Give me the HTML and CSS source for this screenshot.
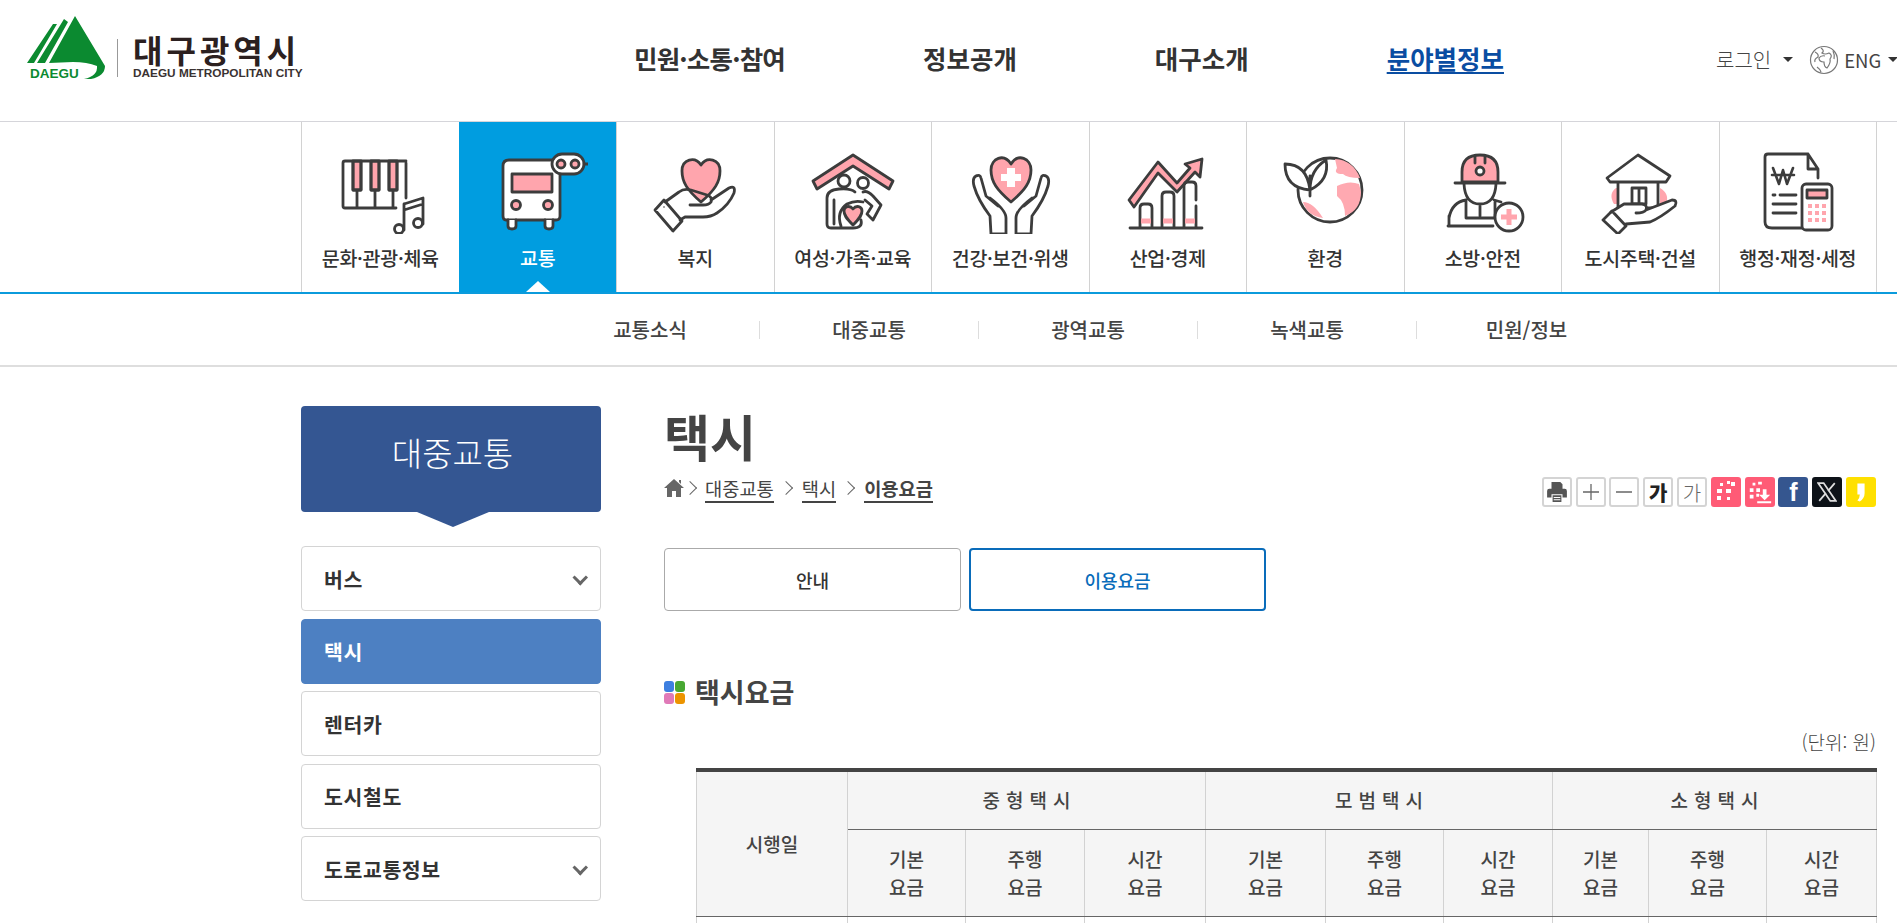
FILE: index.html
```html
<!DOCTYPE html>
<html lang="ko">
<head>
<meta charset="utf-8">
<title>택시 이용요금</title>
<link rel="stylesheet" href="styles.css">
</head>
<body>
<header class="top">
  <a class="logo">
    <span class="mark">
      <svg width="80" height="64" viewBox="0 0 80 64">
        <path class="g" d="M48 0 L78 50 Q78 60 64 63 L57 63 Q71 60 70 50 Q60 46 46 46 L22 47 Z M26 8 L30 8 L7 47 L0 47 Z M37 3 L41 6 L18 47 L10 47 Z"/>
        <text class="mark-t" x="3" y="62">DAEGU</text>
      </svg>
    </span>
    <span class="logo-bar"></span>
    <span class="logo-txt"><b>대구광역시</b><i>DAEGU METROPOLITAN CITY</i></span>
  </a>
  <nav class="gnb">
    <a>민원·소통·참여</a><a>정보공개</a><a>대구소개</a><a class="on">분야별정보</a>
  </nav>
  <div class="util">
    <span class="login">로그인</span><span class="caret"></span>
    <svg class="globe" width="30" height="30" viewBox="0 0 30 30"><circle cx="15" cy="15" r="13.5"/><path d="M6 7 Q10 9 9 12 Q5 14 6 17 M12 3 Q16 6 13 8 Q16 10 20 8 Q24 10 21 14 Q22 18 18 23 Q15 22 15 17 Q10 17 10 13 Q12 10 16 11 M24 6 Q26 10 25 14 M8 22 Q11 24 12 27"/></svg>
    <span class="eng">ENG</span><span class="caret"></span>
  </div>
</header>

<nav class="cats">
  <a class="cat">
    <svg class="ic" viewBox="0 0 100 84"><rect class="p" x="23" y="11" width="8" height="29"/><rect class="p" x="41" y="11" width="8" height="29"/><rect class="p" x="59" y="11" width="8" height="29"/><path d="M76 11 H15 Q13 11 13 13 V56 Q13 58 15 58 H66 M27 40 V58 M45 40 V58 M63 40 V58 M23 11 V40 H31 V11 M41 11 V40 H49 V11 M59 11 V40 H67 V11 M76 13 V48 M74 54 L93 48 V74 M74 54 V80 M74 60 L93 54"/><circle cx="69" cy="79" r="4.5"/><circle cx="88" cy="73" r="4.5"/></svg>
    <span>문화·관광·체육</span>
  </a>
  <a class="cat on">
    <svg class="ic" viewBox="0 0 100 84"><path class="w" d="M21 10 H72 V66 Q72 70 68 70 H18 Q15 70 15 66 V16 Q15 10 21 10 Z"/><rect class="p" x="24" y="24" width="40" height="18"/><circle class="p" cx="28" cy="55" r="4.5"/><circle class="p" cx="60" cy="55" r="4.5"/><path class="w" d="M20 70 V76 Q20 79 24 79 Q28 79 28 76 V70 M57 70 V76 Q57 79 61 79 Q65 79 65 76 V70"/><rect class="w" x="64" y="4" width="32" height="20" rx="10"/><circle class="p" cx="73" cy="14" r="4"/><circle class="p" cx="87" cy="14" r="4"/><path d="M96 14 H100"/></svg>
    <span>교통</span>
  </a>
  <a class="cat">
    <svg class="ic" viewBox="0 0 100 84"><path class="p" d="M56 52 C42 40 37 32 37 21 C37 9 50 6 56 15 C62 6 75 9 75 21 C75 32 70 40 56 52 Z"/><path d="M10 60 L19 50 L37 71 L28 81 Z M20 52 L34 42 Q39 38 46 40 L62 45 Q68 47 66 52 Q64 55 58 55 L45 55 M66 50 L84 38 Q91 35 89 43 Q84 55 72 63 Q66 67 58 67 L40 67 L35 70"/><circle class="dot" cx="19" cy="57" r="0.8"/></svg>
    <span>복지</span>
  </a>
  <a class="cat">
    <svg class="ic" viewBox="0 0 100 84"><path class="p" d="M50 5 L90 31 L86 39 L50 16 L14 39 L10 31 Z"/><circle cx="41" cy="31" r="6"/><circle cx="60" cy="33" r="5.5"/><path d="M52 42 Q48 38 36 39 Q24 40 24 48 V74 Q24 78 28 78 H50 Q60 78 58 70 M31 50 V74 M38 76 Q33 62 44 54 Q52 50 60 52 M60 42 Q64 40 70 46 L78 55 L70 70 L64 64 L69 56 L62 50"/><path class="p" d="M50 75 C43 68 41 65 41 61 C41 56 47 55 50 59 C53 55 59 56 59 61 C59 65 57 68 50 75 Z"/></svg>
    <span>여성·가족·교육</span>
  </a>
  <a class="cat">
    <svg class="ic" viewBox="0 0 100 84"><path class="p" d="M51 52 C37 40 31 32 31 20 C31 8 44 3 51 14 C58 3 71 8 71 20 C71 32 65 40 51 52 Z"/><path class="cross" d="M47 18 H55 V24 H61 V31 H55 V37 H47 V31 H41 V24 H47 Z"/><path d="M16 26 Q20 24 21 28 L26 46 L38 56 M16 26 Q12 28 14 36 Q18 50 30 66 L31 84 H46 V68 Q46 60 30 48 M86 26 Q82 24 81 28 L76 46 L64 56 M86 26 Q90 28 88 36 Q84 50 72 66 L71 84 H56 V68 Q56 60 72 48"/></svg>
    <span>건강·보건·위생</span>
  </a>
  <a class="cat">
    <svg class="ic" viewBox="0 0 100 84"><path class="p" d="M11 50 L40 12 L59 33 L72 18 L67 14 L84 9 L82 27 L77 22 L59 42 L40 23 L16 57 Z"/><path class="w2" d="M22 77 V58 Q22 54 26 54 H30 Q34 54 34 58 V77 M44 77 V46 Q44 42 48 42 H52 Q56 42 56 46 V77 M66 77 V36 Q66 32 70 32 H74 Q78 32 78 36 V50 M78 56 V77"/><path class="pk" d="M23 71 H33 M45 71 H55 M67 71 H77"/><path d="M12 78 H84"/></svg>
    <span>산업·경제</span>
  </a>
  <a class="cat">
    <svg class="ic" viewBox="0 0 100 84"><circle class="globe-b" cx="55" cy="40" r="32"/><path class="ps" d="M60 9 Q78 10 85 28 Q72 28 68 24 Q58 24 62 18 Z M62 36 Q74 30 84 34 L86 42 Q86 60 70 66 Q70 52 62 46 Z M28 52 Q38 52 48 68 Q32 66 28 52 Z"/><path class="lf" d="M35 40 Q10 38 10 14 Q32 14 35 40 Z M35 40 Q35 20 51 10 Q55 30 35 40 Z M35 26 V46"/></svg>
    <span>환경</span>
  </a>
  <a class="cat">
    <svg class="ic" viewBox="0 0 100 84"><path class="p" d="M29 32 V22 Q29 5 47 5 Q65 5 65 22 V32 Z"/><circle class="w" cx="47" cy="21" r="4"/><path d="M42 6 V13 M52 6 V13 M22 33 H72 M31 34 Q32 54 47 54 Q62 54 63 34 M33 50 Q19 52 16 68 V76 M61 50 L68 52 M33 50 V68 H62 V52 M47 56 V66 M15 76 H60 M16 66 V71"/><circle class="wp" cx="76" cy="67" r="14"/><path class="crossp" d="M76 59 V75 M68 67 H84"/></svg>
    <span>소방·안전</span>
  </a>
  <a class="cat">
    <svg class="ic" viewBox="0 0 100 84"><path class="pn" d="M26 38 Q18 44 24 54 H30 V38 Z M70 38 Q80 44 76 54 H70 V38 Z"/><path class="w" d="M28 30 V58 H68 V30"/><path class="w" d="M17 28 L48 5 L80 26 L76 32 H20 Z"/><path d="M42 38 H56 V54 H42 Z M49 38 V54"/><path class="w" d="M13 70 L22 61 L36 76 L28 84 Z"/><path class="w" d="M21 62 L34 54 H52 Q58 55 56 60 Q54 63 46 63 M56 60 L82 50 Q88 50 85 56 Q70 68 60 72 L36 74"/></svg>
    <span>도시주택·건설</span>
  </a>
  <a class="cat">
    <svg class="ic" viewBox="0 0 100 84"><path d="M58 78 H24 Q17 78 17 72 V7 Q17 4 20 4 H60 L70 19 V28 M60 4 V19 H70"/><path class="won" d="M25 18 L31 34 L35 20 L39 34 L45 18 M24 25 H46"/><path d="M25 45 H27 M32 45 H48 M25 54 H48 M25 63 H48"/><rect class="w" x="54" y="34" width="30" height="46" rx="4"/><rect class="p" x="59" y="40" width="20" height="8"/><path class="keys" d="M60 54 h4 v4 h-4 z M67 54 h4 v4 h-4 z M74 54 h4 v4 h-4 z M60 61 h4 v4 h-4 z M67 61 h4 v4 h-4 z M74 61 h4 v4 h-4 z M60 68 h4 v4 h-4 z M67 68 h4 v4 h-4 z M74 68 h4 v4 h-4 z"/></svg>
    <span>행정·재정·세정</span>
  </a>
</nav>

<nav class="subs">
  <a>교통소식</a><a>대중교통</a><a>광역교통</a><a>녹색교통</a><a>민원/정보</a>
</nav>

<div class="wrap">
  <aside class="side">
    <h2 class="side-t">대중교통</h2>
    <ul class="menu">
      <li class="more">버스</li>
      <li class="on">택시</li>
      <li>렌터카</li>
      <li>도시철도</li>
      <li class="more">도로교통정보</li>
    </ul>
  </aside>
  <main class="main">
    <h1 class="title">택시</h1>
    <div class="crumbbar">
      <div class="crumb">
        <svg class="home" width="20" height="20" viewBox="0 0 20 20"><path d="M10 1 L20 10 H17 V19 H12 V13 H8 V19 H3 V10 H0 Z M15 2 H17 V6 L15 4 Z"/></svg>
        <i class="chev"></i><a>대중교통</a><i class="chev"></i><a>택시</a><i class="chev"></i><a class="now">이용요금</a>
      </div>
      <div class="tools">
        <span class="tb"><svg width="22" height="22" viewBox="0 0 20 20"><path class="dk" d="M5 1 H13 L15 3 V7 H5 Z M1 9 Q1 7 3 7 H17 Q19 7 19 9 V15 H15 V12 H5 V15 H1 Z M6 13 H14 V19 H6 Z"/><path class="wh" d="M7 15 H13 M7 17 H13"/></svg></span>
        <span class="tb"><svg width="18" height="18" viewBox="0 0 18 18"><path class="ln" d="M1 9 H17 M9 1 V17"/></svg></span>
        <span class="tb"><svg width="18" height="18" viewBox="0 0 18 18"><path class="ln" d="M1 9 H17"/></svg></span>
        <span class="tb ga strong">가</span>
        <span class="tb ga">가</span>
        <span class="tb pink"><svg width="26" height="26" viewBox="0 0 26 26"><path class="wf" d="M7 4 h3 v3 h-3 z M14 2 h3 v3 h-3 z M18 3 h4 v4 h-4 z M4 10 h5 v4 h-5 z M13 10 h5 v4 h-5 z M4 17 h4 v4 h-4 z M14 18 h3 v3 h-3 z"/></svg></span>
        <span class="tb pink"><svg width="28" height="28" viewBox="0 0 28 28"><path class="wf" d="M6 4 h3 v3 h-3 z M12 3 h4 v3 h-4 z M3 10 h4 v4 h-4 z M10 10 h4 v4 h-4 z M3 17 h4 v4 h-4 z M10 16 h3 v3 h-3 z M17 11 h4 v6 h4 l-6 6 l-6 -6 h4 z M11 24 h15 v2 h-15 z"/></svg></span>
        <span class="tb fb">f</span>
        <span class="tb xx"><svg width="20" height="20" viewBox="0 0 18 18"><path class="wx" d="M1 1 H6 L17 17 H12 Z"/><path class="wl" d="M16 1 L10 8 M8 10 L2 17"/></svg></span>
        <span class="tb kk"><svg width="24" height="24" viewBox="0 0 20 20"><path class="kq" d="M7 3 H13 L13 11 Q13 15 9 18 L7 17 Q9 15 9 12 H7 Z"/></svg></span>
      </div>
    </div>
    <div class="tabs">
      <a class="tab">안내</a>
      <a class="tab on">이용요금</a>
    </div>
    <h3 class="sec"><i class="dots"><b class="d1"></b><b class="d2"></b><b class="d3"></b><b class="d4"></b></i>택시요금</h3>
    <p class="unit">(단위: 원)</p>
    <table class="fare">
      <colgroup><col class="c1"><col class="c2"><col class="c3"><col class="c4"><col class="c5"><col class="c6"><col class="c7"><col class="c8"><col class="c9"><col class="c10"></colgroup>
      <thead>
        <tr class="r1"><th rowspan="2">시행일</th><th colspan="3" class="sp">중형택시</th><th colspan="3" class="sp">모범택시</th><th colspan="3" class="sp">소형택시</th></tr>
        <tr class="r2"><th>기본<br>요금</th><th>주행<br>요금</th><th>시간<br>요금</th><th>기본<br>요금</th><th>주행<br>요금</th><th>시간<br>요금</th><th>기본<br>요금</th><th>주행<br>요금</th><th>시간<br>요금</th></tr>
      </thead>
      <tbody>
        <tr class="r3"><td></td><td></td><td></td><td></td><td></td><td></td><td></td><td></td><td></td><td></td></tr>
      </tbody>
    </table>
  </main>
</div>
</body>
</html>
```
FILE: styles.css
```css
* { box-sizing: border-box; }
html, body { margin: 0; height: 923px; overflow: hidden; background: #fff; }
body { font-family: "Noto Sans CJK KR", "Noto Sans", sans-serif; color: #333; }
a { color: inherit; text-decoration: none; }
ul { list-style: none; margin: 0; padding: 0; }
h1, h2, h3, p { margin: 0; }

/* header */
.top { display: flex; align-items: center; height: 121px; position: relative; padding-left: 27px; }
.logo { display: flex; align-items: center; width: 607px; flex: none; }
.mark { display: block; height: 64px; width: 80px; margin-bottom: 25px; }
.g { fill: #0b8a30; }
.mark-t { font: 700 13.5px "Liberation Sans", sans-serif; fill: #0b8a30; }
.logo-bar { width: 1px; height: 38px; background: #999; margin: 0 15px 5px 10px; flex: none; }
.logo-txt { display: flex; flex-direction: column; margin-bottom: 8px; }
.logo-txt b { font-size: 32px; line-height: 30px; color: #2b2020; font-weight: 700; letter-spacing: 4px; white-space: nowrap; }
.logo-txt i { font: 700 11.8px/13px "Liberation Sans", sans-serif; margin-top: 3px; color: #3a3232; white-space: nowrap; }
.gnb { display: flex; gap: 138px; flex: none; margin-bottom: 6px; }
.gnb a { font-size: 25.5px; font-weight: 700; color: #333; line-height: 34px; white-space: nowrap; }
.gnb a:first-child { letter-spacing: -0.8px; }
.gnb a.on { color: #0a4da2; text-decoration: underline; text-underline-offset: 3px; }
.util { display: flex; align-items: center; margin-left: 212px; margin-bottom: 2px; white-space: nowrap; flex: none; }
.login { font-size: 20px; font-weight: 300; color: #444; }
.eng { font-size: 18.5px; color: #444; margin: 0 7px 0 5px; }
.caret { width: 0; height: 0; border: 5px solid transparent; border-top: 5px solid #333; border-bottom: 0; margin-left: 12px; flex: none; }
.eng + .caret { margin-left: 0; }
.globe { margin-left: 16px; fill: none; stroke: #777; stroke-width: 1.2; flex: none; }

/* category strip */
.cats { display: flex; height: 173px; padding-left: 301px; border-top: 1px solid #d5d5da; border-bottom: 2px solid #0b9bdc; background: #fff; }
.cat { width: 157.5px; flex: none; border-left: 1px solid #d2d2d2; display: flex; flex-direction: column; align-items: center; padding-top: 28px; position: relative; color: #333; }
.cat:last-child { width: 158.5px; border-right: 1px solid #d2d2d2; }
.cat span { font-size: 19.5px; line-height: 28px; font-weight: 500; margin-top: 10px; letter-spacing: -0.3px; white-space: nowrap; }
.cat.on { background: #009de0; border-left-color: #009de0; color: #fff; }
.cat.on::after { content: ""; position: absolute; left: 50%; bottom: 0; margin-left: -12px; border: 12px solid transparent; border-top: 0; border-bottom: 11px solid #fff; }
.ic { width: 100px; height: 84px; flex: none; fill: none; stroke: #3c3c3c; stroke-width: 2.8; stroke-linecap: round; stroke-linejoin: round; }
.ic .p { fill: #ffa5ad; }
.ic .w, .ic .wp { fill: #fff; }
.ic .ps { fill: #ffa9b1; stroke: none; }
.ic .pn { fill: #ffa5ad; stroke: none; }
.ic .pk { stroke: #ffa5ad; stroke-width: 5; stroke-linecap: butt; }
.ic .lf { fill: #fff; }
.ic .cross { fill: #fff; stroke: none; }
.ic .crossp { stroke: #ffa5ad; stroke-width: 5; stroke-linecap: butt; }
.ic .keys { fill: #ffa5ad; stroke: none; }
.ic .won { stroke-width: 2.6; }
.ic .dot { fill: #3c3c3c; stroke: none; }

/* sub nav */
.subs { display: flex; height: 73px; padding-left: 541px; border-bottom: 2px solid #dedede; align-items: center; }
.subs a { width: 219px; text-align: center; font-size: 20px; font-weight: 500; color: #444; line-height: 18px; border-right: 1px solid #ddd; }
.subs a:last-child { border-right: 0; }

/* body */
.wrap { display: flex; padding: 39px 21px 0 301px; gap: 63px; }
.side { width: 300px; flex: none; }
.side-t { height: 106px; padding-left: 3px; background: #345692; border-radius: 4px; color: #fff; font-size: 33px; font-weight: 300; text-align: center; line-height: 92px; position: relative; margin-bottom: 34px; }
.side-t::after { content: ""; position: absolute; left: 50%; top: 100%; margin-left: -34px; border-style: solid; border-width: 15px 36px 0; border-color: #345692 transparent transparent; }
.menu { display: flex; flex-direction: column; gap: 7.5px; }
.menu li { height: 65px; border: 1px solid #d4d4d4; border-radius: 4px; font-size: 20.5px; font-weight: 700; color: #333; display: flex; align-items: center; padding-left: 22px; letter-spacing: 0.6px; position: relative; }
.menu li.on { background: #4d80c2; border-color: #4d80c2; color: #fff; }
.menu li.more::after { content: ""; position: absolute; right: 15px; top: 25px; width: 7.5px; height: 7.5px; border: solid #666; border-width: 0 3px 3px 0; transform: rotate(45deg); }

.main { width: 1212px; flex: none; }
.title { font-size: 50px; line-height: 60px; font-weight: 700; color: #444; margin-top: -1px; }
.crumbbar { display: flex; justify-content: space-between; align-items: flex-start; height: 83px; }
.crumb { display: flex; align-items: center; gap: 7px; height: 30px; margin-top: 8px; font-size: 18.7px; color: #444; }
.crumb a { border-bottom: 2px solid #444; line-height: 27px; }
.crumb a.now { font-weight: 700; }
.home { fill: #666; }
.chev { width: 10px; height: 10px; border: solid #666; border-width: 1.5px 1.5px 0 0; transform: rotate(45deg); margin: 0 3px 0 -6px; flex: none; }
.crumb a + .chev { margin: 0 4px 0 0; }
.tools { display: flex; gap: 3.8px; margin-top: 12px; }
.tb { width: 30px; height: 30px; border: 2px solid #d4d4d4; border-radius: 3px; display: flex; align-items: center; justify-content: center; background: #fff; color: #555; overflow: hidden; }
.ln { stroke: #666; stroke-width: 1.3; fill: none; }
.tb.ga { font-size: 20px; font-weight: 300; color: #666; }
.tb.ga.strong { font-weight: 900; color: #222; }
.tb.pink { background: #ff5b76; border-color: #ff5b76; }
.tb.fb { background: #35568f; border-color: #35568f; color: #fff; font: 700 25px/30px "Liberation Sans", sans-serif; }
.tb.xx { background: #0d1218; border-color: #0d1218; }
.tb.kk { background: #ffe000; border-color: #ffe000; }
.dk { fill: #555; }
.wh { stroke: #fff; fill: none; stroke-width: 1; }
.wf { fill: #fff; }
.wx { fill: none; stroke: #ddd; stroke-width: 1.6; }
.wl { stroke: #ddd; stroke-width: 1.6; fill: none; }
.kq { fill: #fff; }

.tabs { display: flex; gap: 8px; margin-bottom: 0; }
.tab { width: 297px; height: 63px; border: 1px solid #aaa; border-radius: 4px; display: flex; align-items: center; justify-content: center; font-size: 18px; font-weight: 500; color: #333; }
.tab.on { border: 2px solid #0a6cba; color: #0a6cba; }

.sec { display: flex; align-items: center; margin-top: 61px; font-size: 27px; line-height: 40px; font-weight: 700; color: #444; }
.dots { display: grid; grid-template-columns: 10px 10px; grid-auto-rows: 11px; gap: 1px; width: 21px; margin-right: 10px; flex: none; }
.dots b { border-radius: 3px; display: block; }
.d1 { background: #3d7fe0; }
.d2 { background: #48a832; }
.d3 { background: #e07ab8; }
.d4 { background: #ec9400; }
.unit { text-align: right; font-size: 19px; font-weight: 300; color: #444; margin-top: 17px; line-height: 26px; }

.fare { margin: 13px 0 0 32px; width: 1180px; table-layout: fixed; border-collapse: collapse; border-top: 4px solid #444; }
.c1 { width: 151px; } .c2 { width: 118px; } .c3 { width: 119px; } .c4 { width: 121px; } .c5 { width: 120px; }
.c6 { width: 118px; } .c7 { width: 109px; } .c8 { width: 96px; } .c9 { width: 118px; } .c10 { width: 110px; }
.fare th { background: #f5f5f5; font-size: 19px; line-height: 28px; font-weight: 500; color: #444; border: 1px solid #d2d2d2; padding: 0; text-align: center; }
.fare thead th { border-bottom: 1px solid #666; }
.fare thead tr + tr th { border-top: 1px solid #666; }
.fare th.sp { letter-spacing: 6px; padding-left: 6px; }
.r1 { height: 59px; }
.r2 { height: 87px; }
.r3 { height: 60px; }
.fare td { border: 1px solid #d2d2d2; }
```
